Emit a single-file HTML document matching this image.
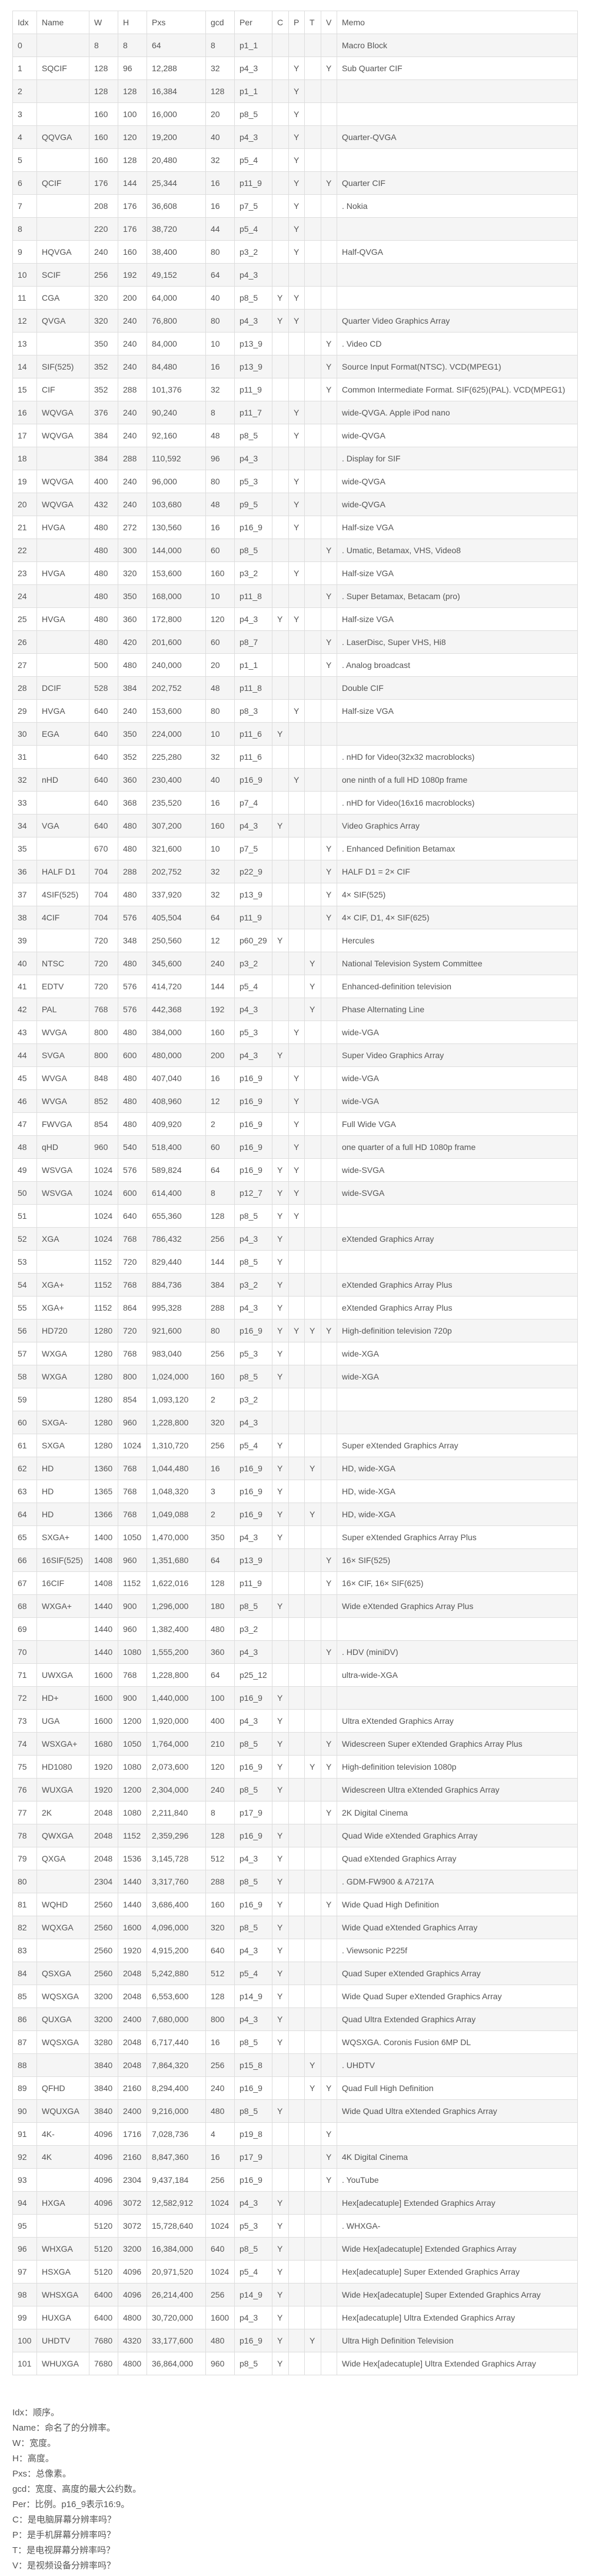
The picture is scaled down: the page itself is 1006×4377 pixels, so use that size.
<!DOCTYPE html>
<html><head><meta charset="utf-8">
<style>
html,body{margin:0;padding:0;background:#fff;}
body{width:1006px;height:4377px;position:relative;font-family:"Liberation Sans","Noto Sans CJK SC",sans-serif;color:#555;}
table{position:absolute;left:21px;top:18px;width:961px;border-collapse:collapse;table-layout:fixed;font-size:14px;}
td{border:1px solid #ddd;padding:0 0 0 8px;height:38px;line-height:38px;white-space:nowrap;overflow:visible;}
tr:nth-child(even) td{background:#f5f5f5;}
tr:first-child td{background:#fff;}
.lg{position:absolute;left:21px;top:4087px;font-size:15px;line-height:26px;color:#555;font-family:"Liberation Sans","Noto Sans CJK SC",sans-serif;}
</style></head><body>
<table>
<colgroup><col style="width:41px"><col style="width:89px"><col style="width:49px"><col style="width:49px"><col style="width:100px"><col style="width:49px"><col style="width:64px"><col style="width:28px"><col style="width:27px"><col style="width:28px"><col style="width:27px"><col></colgroup>
<tr><td>Idx<td>Name<td>W<td>H<td>Pxs<td>gcd<td>Per<td>C<td>P<td>T<td>V<td>Memo
<tr><td>0<td><td>8<td>8<td>64<td>8<td>p1_1<td><td><td><td><td>Macro Block
<tr><td>1<td>SQCIF<td>128<td>96<td>12,288<td>32<td>p4_3<td><td>Y<td><td>Y<td>Sub Quarter CIF
<tr><td>2<td><td>128<td>128<td>16,384<td>128<td>p1_1<td><td>Y<td><td><td>
<tr><td>3<td><td>160<td>100<td>16,000<td>20<td>p8_5<td><td>Y<td><td><td>
<tr><td>4<td>QQVGA<td>160<td>120<td>19,200<td>40<td>p4_3<td><td>Y<td><td><td>Quarter-QVGA
<tr><td>5<td><td>160<td>128<td>20,480<td>32<td>p5_4<td><td>Y<td><td><td>
<tr><td>6<td>QCIF<td>176<td>144<td>25,344<td>16<td>p11_9<td><td>Y<td><td>Y<td>Quarter CIF
<tr><td>7<td><td>208<td>176<td>36,608<td>16<td>p7_5<td><td>Y<td><td><td>. Nokia
<tr><td>8<td><td>220<td>176<td>38,720<td>44<td>p5_4<td><td>Y<td><td><td>
<tr><td>9<td>HQVGA<td>240<td>160<td>38,400<td>80<td>p3_2<td><td>Y<td><td><td>Half-QVGA
<tr><td>10<td>SCIF<td>256<td>192<td>49,152<td>64<td>p4_3<td><td><td><td><td>
<tr><td>11<td>CGA<td>320<td>200<td>64,000<td>40<td>p8_5<td>Y<td>Y<td><td><td>
<tr><td>12<td>QVGA<td>320<td>240<td>76,800<td>80<td>p4_3<td>Y<td>Y<td><td><td>Quarter Video Graphics Array
<tr><td>13<td><td>350<td>240<td>84,000<td>10<td>p13_9<td><td><td><td>Y<td>. Video CD
<tr><td>14<td>SIF(525)<td>352<td>240<td>84,480<td>16<td>p13_9<td><td><td><td>Y<td>Source Input Format(NTSC). VCD(MPEG1)
<tr><td>15<td>CIF<td>352<td>288<td>101,376<td>32<td>p11_9<td><td><td><td>Y<td>Common Intermediate Format. SIF(625)(PAL). VCD(MPEG1)
<tr><td>16<td>WQVGA<td>376<td>240<td>90,240<td>8<td>p11_7<td><td>Y<td><td><td>wide-QVGA. Apple iPod nano
<tr><td>17<td>WQVGA<td>384<td>240<td>92,160<td>48<td>p8_5<td><td>Y<td><td><td>wide-QVGA
<tr><td>18<td><td>384<td>288<td>110,592<td>96<td>p4_3<td><td><td><td><td>. Display for SIF
<tr><td>19<td>WQVGA<td>400<td>240<td>96,000<td>80<td>p5_3<td><td>Y<td><td><td>wide-QVGA
<tr><td>20<td>WQVGA<td>432<td>240<td>103,680<td>48<td>p9_5<td><td>Y<td><td><td>wide-QVGA
<tr><td>21<td>HVGA<td>480<td>272<td>130,560<td>16<td>p16_9<td><td>Y<td><td><td>Half-size VGA
<tr><td>22<td><td>480<td>300<td>144,000<td>60<td>p8_5<td><td><td><td>Y<td>. Umatic, Betamax, VHS, Video8
<tr><td>23<td>HVGA<td>480<td>320<td>153,600<td>160<td>p3_2<td><td>Y<td><td><td>Half-size VGA
<tr><td>24<td><td>480<td>350<td>168,000<td>10<td>p11_8<td><td><td><td>Y<td>. Super Betamax, Betacam (pro)
<tr><td>25<td>HVGA<td>480<td>360<td>172,800<td>120<td>p4_3<td>Y<td>Y<td><td><td>Half-size VGA
<tr><td>26<td><td>480<td>420<td>201,600<td>60<td>p8_7<td><td><td><td>Y<td>. LaserDisc, Super VHS, Hi8
<tr><td>27<td><td>500<td>480<td>240,000<td>20<td>p1_1<td><td><td><td>Y<td>. Analog broadcast
<tr><td>28<td>DCIF<td>528<td>384<td>202,752<td>48<td>p11_8<td><td><td><td><td>Double CIF
<tr><td>29<td>HVGA<td>640<td>240<td>153,600<td>80<td>p8_3<td><td>Y<td><td><td>Half-size VGA
<tr><td>30<td>EGA<td>640<td>350<td>224,000<td>10<td>p11_6<td>Y<td><td><td><td>
<tr><td>31<td><td>640<td>352<td>225,280<td>32<td>p11_6<td><td><td><td><td>. nHD for Video(32x32 macroblocks)
<tr><td>32<td>nHD<td>640<td>360<td>230,400<td>40<td>p16_9<td><td>Y<td><td><td>one ninth of a full HD 1080p frame
<tr><td>33<td><td>640<td>368<td>235,520<td>16<td>p7_4<td><td><td><td><td>. nHD for Video(16x16 macroblocks)
<tr><td>34<td>VGA<td>640<td>480<td>307,200<td>160<td>p4_3<td>Y<td><td><td><td>Video Graphics Array
<tr><td>35<td><td>670<td>480<td>321,600<td>10<td>p7_5<td><td><td><td>Y<td>. Enhanced Definition Betamax
<tr><td>36<td>HALF D1<td>704<td>288<td>202,752<td>32<td>p22_9<td><td><td><td>Y<td>HALF D1 = 2× CIF
<tr><td>37<td>4SIF(525)<td>704<td>480<td>337,920<td>32<td>p13_9<td><td><td><td>Y<td>4× SIF(525)
<tr><td>38<td>4CIF<td>704<td>576<td>405,504<td>64<td>p11_9<td><td><td><td>Y<td>4× CIF, D1, 4× SIF(625)
<tr><td>39<td><td>720<td>348<td>250,560<td>12<td>p60_29<td>Y<td><td><td><td>Hercules
<tr><td>40<td>NTSC<td>720<td>480<td>345,600<td>240<td>p3_2<td><td><td>Y<td><td>National Television System Committee
<tr><td>41<td>EDTV<td>720<td>576<td>414,720<td>144<td>p5_4<td><td><td>Y<td><td>Enhanced-definition television
<tr><td>42<td>PAL<td>768<td>576<td>442,368<td>192<td>p4_3<td><td><td>Y<td><td>Phase Alternating Line
<tr><td>43<td>WVGA<td>800<td>480<td>384,000<td>160<td>p5_3<td><td>Y<td><td><td>wide-VGA
<tr><td>44<td>SVGA<td>800<td>600<td>480,000<td>200<td>p4_3<td>Y<td><td><td><td>Super Video Graphics Array
<tr><td>45<td>WVGA<td>848<td>480<td>407,040<td>16<td>p16_9<td><td>Y<td><td><td>wide-VGA
<tr><td>46<td>WVGA<td>852<td>480<td>408,960<td>12<td>p16_9<td><td>Y<td><td><td>wide-VGA
<tr><td>47<td>FWVGA<td>854<td>480<td>409,920<td>2<td>p16_9<td><td>Y<td><td><td>Full Wide VGA
<tr><td>48<td>qHD<td>960<td>540<td>518,400<td>60<td>p16_9<td><td>Y<td><td><td>one quarter of a full HD 1080p frame
<tr><td>49<td>WSVGA<td>1024<td>576<td>589,824<td>64<td>p16_9<td>Y<td>Y<td><td><td>wide-SVGA
<tr><td>50<td>WSVGA<td>1024<td>600<td>614,400<td>8<td>p12_7<td>Y<td>Y<td><td><td>wide-SVGA
<tr><td>51<td><td>1024<td>640<td>655,360<td>128<td>p8_5<td>Y<td>Y<td><td><td>
<tr><td>52<td>XGA<td>1024<td>768<td>786,432<td>256<td>p4_3<td>Y<td><td><td><td>eXtended Graphics Array
<tr><td>53<td><td>1152<td>720<td>829,440<td>144<td>p8_5<td>Y<td><td><td><td>
<tr><td>54<td>XGA+<td>1152<td>768<td>884,736<td>384<td>p3_2<td>Y<td><td><td><td>eXtended Graphics Array Plus
<tr><td>55<td>XGA+<td>1152<td>864<td>995,328<td>288<td>p4_3<td>Y<td><td><td><td>eXtended Graphics Array Plus
<tr><td>56<td>HD720<td>1280<td>720<td>921,600<td>80<td>p16_9<td>Y<td>Y<td>Y<td>Y<td>High-definition television 720p
<tr><td>57<td>WXGA<td>1280<td>768<td>983,040<td>256<td>p5_3<td>Y<td><td><td><td>wide-XGA
<tr><td>58<td>WXGA<td>1280<td>800<td>1,024,000<td>160<td>p8_5<td>Y<td><td><td><td>wide-XGA
<tr><td>59<td><td>1280<td>854<td>1,093,120<td>2<td>p3_2<td><td><td><td><td>
<tr><td>60<td>SXGA-<td>1280<td>960<td>1,228,800<td>320<td>p4_3<td><td><td><td><td>
<tr><td>61<td>SXGA<td>1280<td>1024<td>1,310,720<td>256<td>p5_4<td>Y<td><td><td><td>Super eXtended Graphics Array
<tr><td>62<td>HD<td>1360<td>768<td>1,044,480<td>16<td>p16_9<td>Y<td><td>Y<td><td>HD, wide-XGA
<tr><td>63<td>HD<td>1365<td>768<td>1,048,320<td>3<td>p16_9<td>Y<td><td><td><td>HD, wide-XGA
<tr><td>64<td>HD<td>1366<td>768<td>1,049,088<td>2<td>p16_9<td>Y<td><td>Y<td><td>HD, wide-XGA
<tr><td>65<td>SXGA+<td>1400<td>1050<td>1,470,000<td>350<td>p4_3<td>Y<td><td><td><td>Super eXtended Graphics Array Plus
<tr><td>66<td>16SIF(525)<td>1408<td>960<td>1,351,680<td>64<td>p13_9<td><td><td><td>Y<td>16× SIF(525)
<tr><td>67<td>16CIF<td>1408<td>1152<td>1,622,016<td>128<td>p11_9<td><td><td><td>Y<td>16× CIF, 16× SIF(625)
<tr><td>68<td>WXGA+<td>1440<td>900<td>1,296,000<td>180<td>p8_5<td>Y<td><td><td><td>Wide eXtended Graphics Array Plus
<tr><td>69<td><td>1440<td>960<td>1,382,400<td>480<td>p3_2<td><td><td><td><td>
<tr><td>70<td><td>1440<td>1080<td>1,555,200<td>360<td>p4_3<td><td><td><td>Y<td>. HDV (miniDV)
<tr><td>71<td>UWXGA<td>1600<td>768<td>1,228,800<td>64<td>p25_12<td><td><td><td><td>ultra-wide-XGA
<tr><td>72<td>HD+<td>1600<td>900<td>1,440,000<td>100<td>p16_9<td>Y<td><td><td><td>
<tr><td>73<td>UGA<td>1600<td>1200<td>1,920,000<td>400<td>p4_3<td>Y<td><td><td><td>Ultra eXtended Graphics Array
<tr><td>74<td>WSXGA+<td>1680<td>1050<td>1,764,000<td>210<td>p8_5<td>Y<td><td><td>Y<td>Widescreen Super eXtended Graphics Array Plus
<tr><td>75<td>HD1080<td>1920<td>1080<td>2,073,600<td>120<td>p16_9<td>Y<td><td>Y<td>Y<td>High-definition television 1080p
<tr><td>76<td>WUXGA<td>1920<td>1200<td>2,304,000<td>240<td>p8_5<td>Y<td><td><td><td>Widescreen Ultra eXtended Graphics Array
<tr><td>77<td>2K<td>2048<td>1080<td>2,211,840<td>8<td>p17_9<td><td><td><td>Y<td>2K Digital Cinema
<tr><td>78<td>QWXGA<td>2048<td>1152<td>2,359,296<td>128<td>p16_9<td>Y<td><td><td><td>Quad Wide eXtended Graphics Array
<tr><td>79<td>QXGA<td>2048<td>1536<td>3,145,728<td>512<td>p4_3<td>Y<td><td><td><td>Quad eXtended Graphics Array
<tr><td>80<td><td>2304<td>1440<td>3,317,760<td>288<td>p8_5<td>Y<td><td><td><td>. GDM-FW900 &amp; A7217A
<tr><td>81<td>WQHD<td>2560<td>1440<td>3,686,400<td>160<td>p16_9<td>Y<td><td><td>Y<td>Wide Quad High Definition
<tr><td>82<td>WQXGA<td>2560<td>1600<td>4,096,000<td>320<td>p8_5<td>Y<td><td><td><td>Wide Quad eXtended Graphics Array
<tr><td>83<td><td>2560<td>1920<td>4,915,200<td>640<td>p4_3<td>Y<td><td><td><td>. Viewsonic P225f
<tr><td>84<td>QSXGA<td>2560<td>2048<td>5,242,880<td>512<td>p5_4<td>Y<td><td><td><td>Quad Super eXtended Graphics Array
<tr><td>85<td>WQSXGA<td>3200<td>2048<td>6,553,600<td>128<td>p14_9<td>Y<td><td><td><td>Wide Quad Super eXtended Graphics Array
<tr><td>86<td>QUXGA<td>3200<td>2400<td>7,680,000<td>800<td>p4_3<td>Y<td><td><td><td>Quad Ultra Extended Graphics Array
<tr><td>87<td>WQSXGA<td>3280<td>2048<td>6,717,440<td>16<td>p8_5<td>Y<td><td><td><td>WQSXGA. Coronis Fusion 6MP DL
<tr><td>88<td><td>3840<td>2048<td>7,864,320<td>256<td>p15_8<td><td><td>Y<td><td>. UHDTV
<tr><td>89<td>QFHD<td>3840<td>2160<td>8,294,400<td>240<td>p16_9<td><td><td>Y<td>Y<td>Quad Full High Definition
<tr><td>90<td>WQUXGA<td>3840<td>2400<td>9,216,000<td>480<td>p8_5<td>Y<td><td><td><td>Wide Quad Ultra eXtended Graphics Array
<tr><td>91<td>4K-<td>4096<td>1716<td>7,028,736<td>4<td>p19_8<td><td><td><td>Y<td>
<tr><td>92<td>4K<td>4096<td>2160<td>8,847,360<td>16<td>p17_9<td><td><td><td>Y<td>4K Digital Cinema
<tr><td>93<td><td>4096<td>2304<td>9,437,184<td>256<td>p16_9<td><td><td><td>Y<td>. YouTube
<tr><td>94<td>HXGA<td>4096<td>3072<td>12,582,912<td>1024<td>p4_3<td>Y<td><td><td><td>Hex[adecatuple] Extended Graphics Array
<tr><td>95<td><td>5120<td>3072<td>15,728,640<td>1024<td>p5_3<td>Y<td><td><td><td>. WHXGA-
<tr><td>96<td>WHXGA<td>5120<td>3200<td>16,384,000<td>640<td>p8_5<td>Y<td><td><td><td>Wide Hex[adecatuple] Extended Graphics Array
<tr><td>97<td>HSXGA<td>5120<td>4096<td>20,971,520<td>1024<td>p5_4<td>Y<td><td><td><td>Hex[adecatuple] Super Extended Graphics Array
<tr><td>98<td>WHSXGA<td>6400<td>4096<td>26,214,400<td>256<td>p14_9<td>Y<td><td><td><td>Wide Hex[adecatuple] Super Extended Graphics Array
<tr><td>99<td>HUXGA<td>6400<td>4800<td>30,720,000<td>1600<td>p4_3<td>Y<td><td><td><td>Hex[adecatuple] Ultra Extended Graphics Array
<tr><td>100<td>UHDTV<td>7680<td>4320<td>33,177,600<td>480<td>p16_9<td>Y<td><td>Y<td><td>Ultra High Definition Television
<tr><td>101<td>WHUXGA<td>7680<td>4800<td>36,864,000<td>960<td>p8_5<td>Y<td><td><td><td>Wide Hex[adecatuple] Ultra Extended Graphics Array
</table>
<div class="lg">
<div>Idx：顺序。</div>
<div>Name：命名了的分辨率。</div>
<div>W：宽度。</div>
<div>H：高度。</div>
<div>Pxs：总像素。</div>
<div>gcd：宽度、高度的最大公约数。</div>
<div>Per：比例。p16_9表示16:9。</div>
<div>C：是电脑屏幕分辨率吗？</div>
<div>P：是手机屏幕分辨率吗？</div>
<div>T：是电视屏幕分辨率吗？</div>
<div>V：是视频设备分辨率吗？</div>
</div>
</body></html>
